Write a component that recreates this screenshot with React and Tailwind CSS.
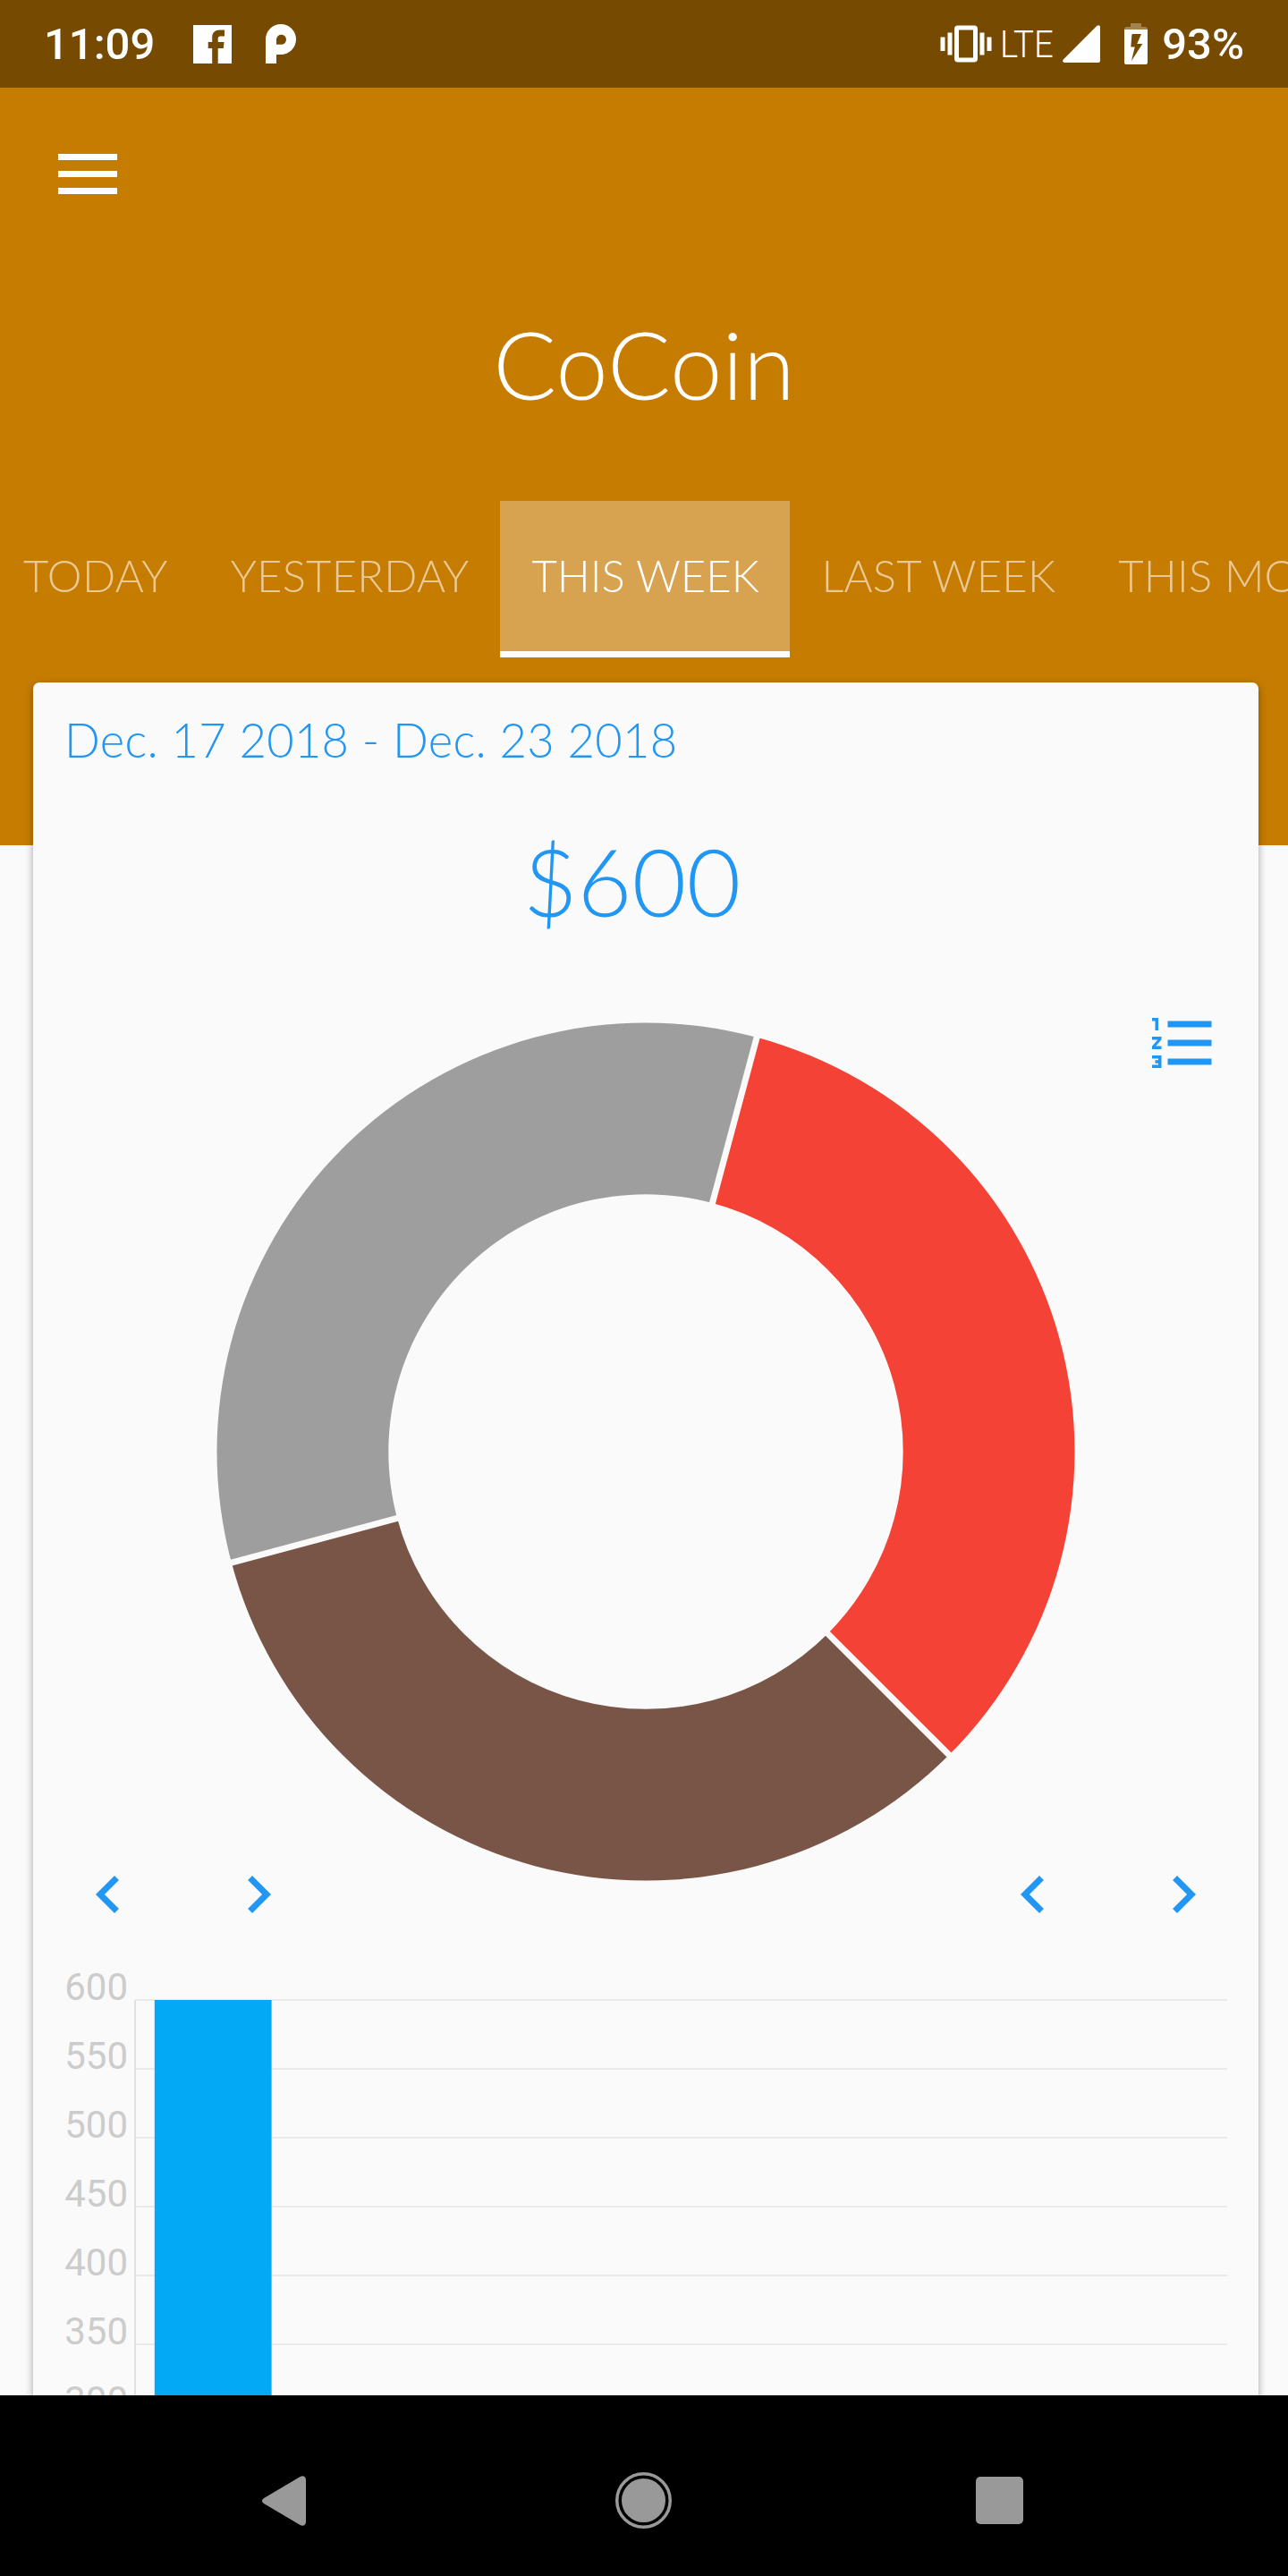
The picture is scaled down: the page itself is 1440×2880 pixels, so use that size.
const TABS = ["TODAY", "YESTERDAY", "THIS WEEK", "LAST WEEK", "THIS MONTH"];
const LABELS = [600, 550, 500, 450, 400, 350, 300];

const CX = 480;
const R_OUT = 479.5;
const R_IN = 287.7;

function polar(r, deg) {
  const a = (deg * Math.PI) / 180;
  return [CX + r * Math.sin(a), CX - r * Math.cos(a)];
}

function slicePath(from, to) {
  const [x1, y1] = polar(R_OUT, from);
  const [x2, y2] = polar(R_OUT, to);
  const [x3, y3] = polar(R_IN, to);
  const [x4, y4] = polar(R_IN, from);
  return `M${x1} ${y1}A${R_OUT} ${R_OUT} 0 0 1 ${x2} ${y2}L${x3} ${y3}A${R_IN} ${R_IN} 0 0 0 ${x4} ${y4}Z`;
}

const SLICES = [
  { from: 15, to: 135, color: "#f44336" },
  { from: 135, to: 255, color: "#795548" },
  { from: 255, to: 375, color: "#9e9e9e" },
];

function StatusBar() {
  return (
    <div className="flex h-[98px] shrink-0 items-center bg-[#764a00] pl-[49px] pr-[49px] font-['Roboto',sans-serif] text-[49px] font-medium text-white">
      <span className="w-[167px] leading-[103px]">11:09</span>
      <svg className="h-[43px] w-[43px]" viewBox="0 0 43 43">
        <path
          fill="#fff"
          d="M0 0H43V43H27.7V26H33.8L34.6 19H27.7V15.500C27.700 13.500 28.700 12.500 30.500 12.500H35V5.500H29.500C24.500 5.500 21.200 8.700 21.200 13.500V19H16.700V26H21.200V43H0Z"
        />
      </svg>
      <svg className="ml-[38px] h-[44px] w-[34px]" viewBox="0 0 34 44">
        <path
          fill="#fff"
          fillRule="evenodd"
          d="M0 44V17a17 17 0 1 1 17 17H12V44ZM12 22.700h5a5.500 5.500 0 1 0-5-5.700Z"
        />
      </svg>
      <div className="ml-auto flex items-center">
        <svg className="h-[42px] w-[58px]" viewBox="0 0 58 42" fill="#fff">
          <rect x="0.500" y="13.500" width="5" height="15.500" />
          <rect x="8.500" y="8.500" width="5" height="25" />
          <rect x="44.500" y="8.500" width="5" height="25" />
          <rect x="52.500" y="13.500" width="5" height="15.500" />
          <path
            fillRule="evenodd"
            d="M20 .5H38Q42 .5 42 4.500V37.500Q42 41.500 38 41.500H20Q16 41.500 16 37.500V4.500Q16 .5 20 .5ZM21 5.500V36.500H37V5.500Z"
          />
        </svg>
        <span className="ml-[8.5px] w-[70.5px] origin-left scale-x-[0.89] text-[43px] font-light leading-[98px]">LTE</span>
        <svg className="h-[42px] w-[42px]" viewBox="0 0 42 42">
          <path fill="#fff" d="M42 2V40Q42 42 40 42H2Q-.8 41.500 .8 38.500L38.500 .8Q41.500-.8 42 2Z" />
        </svg>
        <svg className="ml-[27px] h-[46px] w-[26px]" viewBox="0 0 26 46">
          <path fill="#a2824f" d="M7 0H19V4H24Q26 4.500 26 7H0Q0 4.500 2 4H7Z" />
          <path
            fill="#fff"
            fillRule="evenodd"
            d="M0 7H26V44Q26 46 24 46H2Q0 46 0 44ZM8.500 12L7.300 26.500H11.700L8 42L20.300 23H14.200L19 12Z"
          />
        </svg>
        <span className="ml-[16px] leading-[103px]">93%</span>
      </div>
    </div>
  );
}

function Header() {
  return (
    <header className="flex h-[847px] shrink-0 flex-col bg-[#c67c00] font-['Lato',sans-serif] text-white">
      <div className="ml-[65px] mt-[74px] flex w-[66px] flex-col gap-[12px]">
        <div className="h-[7px] bg-white" />
        <div className="h-[7px] bg-white" />
        <div className="h-[7px] bg-white" />
      </div>
      <h1 className="mt-[126px] text-center text-[105px] font-light leading-[127px]">CoCoin</h1>
      <nav className="mt-[90px] flex h-[175px] overflow-hidden whitespace-nowrap text-[49px] font-light leading-[167px]">
        {TABS.map((t) =>
          t === "THIS WEEK" ? (
            <div key={t} className="w-[324px] shrink-0 border-b-[7px] border-white bg-[#d8a351] pl-[35px]">
              {t}
            </div>
          ) : (
            <div
              key={t}
              className="shrink-0 px-[35px] tracking-[0.2px] text-[#e9c995] first:pl-[26px] first:tracking-[0.4px]"
            >
              {t}
            </div>
          )
        )}
      </nav>
    </header>
  );
}

function Chevron({ right }) {
  return (
    <svg className="h-[84px] w-[84px]" viewBox="0 0 24 24" fill="#2196f3">
      {right ? (
        <path d="M10 6L8.590 7.410 13.170 12l-4.580 4.590L10 18l6-6z" />
      ) : (
        <path d="M15.410 7.410L14 6l-6 6 6 6 1.410-1.410L10.830 12z" />
      )}
    </svg>
  );
}

function Pager() {
  return (
    <div className="flex gap-[84px]">
      <Chevron />
      <Chevron right />
    </div>
  );
}

function Donut() {
  return (
    <svg className="mt-[64px] h-[960px] w-[960px] self-start justify-self-center [grid-area:1/1]" viewBox="0 0 960 960">
      {SLICES.map((s) => (
        <path key={s.color} d={slicePath(s.from, s.to)} fill={s.color} />
      ))}
      {SLICES.map((s) => {
        const [x1, y1] = polar(R_IN - 5, s.from);
        const [x2, y2] = polar(R_OUT + 5, s.from);
        return <line key={s.color} x1={x1} y1={y1} x2={x2} y2={y2} stroke="#fafafa" strokeWidth="7" />;
      })}
    </svg>
  );
}

function BarChart() {
  return (
    <div className="flex">
      <div className="w-[106px] shrink-0 text-right font-['Roboto',sans-serif] text-[42px] text-[#cccccc]">
        {LABELS.map((n) => (
          <div key={n} className="h-[77px] leading-[77px]">
            {n}
          </div>
        ))}
      </div>
      <svg className="ml-[7px] mt-[52px] h-[470px] w-[1222px]" viewBox="0 0 1222 470">
        {LABELS.map((n, i) => (
          <rect key={n} x="1" y={i * 77} width="1221" height="2" fill="#eaeaea" />
        ))}
        <rect x="0" y="1" width="2" height="469" fill="#e0e0e0" />
        <rect x="22.800" y="1" width="130.800" height="469" fill="#03a9f4" />
      </svg>
    </div>
  );
}

function Card() {
  return (
    <main className="-mt-[198px] flex min-h-0 flex-1 flex-col overflow-hidden pl-[37px] pr-[33px] pt-[16px]">
      <section className="flex h-[2000px] shrink-0 flex-col rounded-t-[7px] bg-[#fafafa] shadow-[0_3px_10px_rgba(0,0,0,0.35)]">
        <div className="h-[127px] pl-[35px] font-['Lato',sans-serif] text-[52.5px] font-light leading-[127px] tracking-[0.27px] text-[#2196f3]">
          Dec. 17 2018 - Dec. 23 2018
        </div>
        <div className="h-[189px] pr-[31px] text-center font-['Lato',sans-serif] text-[105px] font-light leading-[189px] text-[#2196f3]">
          $600
        </div>
        <div className="grid h-[1104px] shrink-0">
          <Donut />
          <svg
            className="mr-[42px] mt-[44.5px] h-[84px] w-[84px] self-start justify-self-end [grid-area:1/1]"
            viewBox="0 0 24 24"
            fill="#2196f3"
          >
            <path d="M2 17h2v.5H3v1h1v.5H2v1h3v-4H2v1zm1-9h1V4H2v1h1v3zm-1 3h1.800L2 13.100v.9h3v-1H3.200L5 10.900V10H2v1zm5-6v2h14V5H7zm0 14h14v-2H7v2zm0-6h14v-2H7v2z" />
          </svg>
          <div className="mb-[23.5px] flex justify-between self-end px-[42px] [grid-area:1/1]">
            <Pager />
            <Pager />
          </div>
        </div>
        <BarChart />
      </section>
    </main>
  );
}

function NavBar() {
  return (
    <div className="flex h-[202px] shrink-0 items-center bg-black pt-[33px]">
      <svg className="ml-[293px] h-[56px] w-[49px]" viewBox="0 0 49 56">
        <path fill="#999" d="M2 25L43 .8Q48-1 49 4V52Q48 57 43 55.200L2 31Q-2 28 2 25Z" />
      </svg>
      <svg className="ml-[346px] h-[63px] w-[63px]" viewBox="0 0 63 63">
        <circle cx="31.500" cy="31.500" r="29.750" fill="none" stroke="#999" strokeWidth="3.500" />
        <circle cx="31.500" cy="31.500" r="24.500" fill="#999" />
      </svg>
      <div className="ml-[340px] h-[53px] w-[53px] rounded-[5px] bg-[#999]" />
    </div>
  );
}

export default function App() {
  return (
    <div className="flex h-[2880px] w-[1440px] flex-col overflow-hidden bg-[#fafafa]">
      <StatusBar />
      <Header />
      <Card />
      <NavBar />
    </div>
  );
}
